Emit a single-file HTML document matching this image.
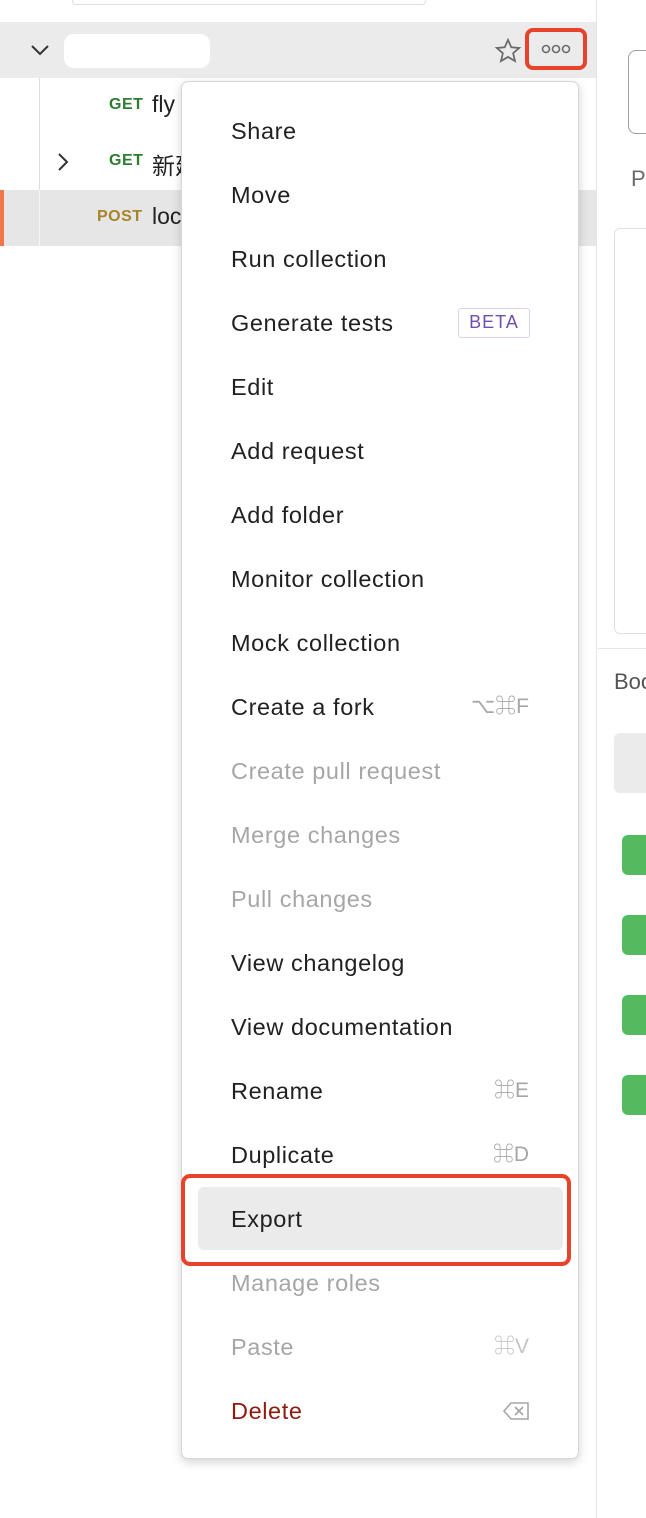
<!DOCTYPE html>
<html><head><meta charset="utf-8"><style>
*{margin:0;padding:0;box-sizing:border-box}
body{width:646px;height:1518px;position:relative;overflow:hidden;background:#fff;font-family:"Liberation Sans","Noto Sans CJK SC",sans-serif}
.abs{position:absolute}
.left{left:0;top:0;width:597px;height:1518px;background:#fff;border-right:1px solid #e6e6e6}
.menu{left:181px;top:81px;width:398px;height:1378px;background:#fff;border:1px solid #d6d6d6;border-radius:7px;box-shadow:0 3px 10px rgba(0,0,0,.18)}
.it{position:absolute;left:49px;font-size:23.5px;letter-spacing:0.6px;color:#212121;line-height:30px}
.dis{color:#a6a6a6}
.sc{position:absolute;right:49px;font-size:21px;color:#a6a6a6;line-height:30px}
.m{font-size:16px;font-weight:bold;letter-spacing:.5px}
.green{left:622px;width:40px;height:40px;background:#55b95f;border-radius:6px}
</style></head><body>
<div class="abs left"></div>
<div class="abs" style="left:72px;top:-6px;width:354px;height:11px;border:1px solid #e0e0e0;border-radius:4px;background:#fff"></div>
<div class="abs" style="left:0;top:22px;width:596px;height:56px;background:#ebebeb"></div>
<svg class="abs" style="left:30px;top:43px" width="20" height="14"><path d="M2 3l8 8 8-8" stroke="#333" stroke-width="2" fill="none"/></svg>
<div class="abs" style="left:64px;top:34px;width:146px;height:34px;background:#fff;border-radius:10px"></div>
<svg class="abs" style="left:494px;top:37px" width="28" height="28" viewBox="0 0 24 24"><path d="M12 2.5l2.8 6.3 6.8.6-5.2 4.5 1.6 6.7L12 17.1l-6 3.5 1.6-6.7-5.2-4.5 6.8-.6z" fill="none" stroke="#6b6b6b" stroke-width="1.5"/></svg>
<div class="abs" style="left:525px;top:28px;width:62px;height:42px;border:4px solid #e8432a;border-radius:8px"></div>
<svg class="abs" style="left:541px;top:44px" width="32" height="10"><circle cx="5" cy="5" r="3.5" fill="none" stroke="#6b6b6b" stroke-width="1.6"/><circle cx="15" cy="5" r="3.5" fill="none" stroke="#6b6b6b" stroke-width="1.6"/><circle cx="25" cy="5" r="3.5" fill="none" stroke="#6b6b6b" stroke-width="1.6"/></svg>
<div class="abs" style="left:39px;top:78px;width:1px;height:168px;background:#dcdcdc"></div>
<div class="abs" style="left:0;top:190px;width:596px;height:56px;background:#e6e6e6"></div>
<div class="abs" style="left:0;top:190px;width:4px;height:56px;background:#f07548"></div>
<div class="abs" style="left:39px;top:190px;width:1px;height:56px;background:#f5f5f5"></div>
<div class="abs m" style="left:109px;top:96px;color:#2e7d32">GET</div>
<div class="abs" style="left:152px;top:91px;font-size:23px;color:#212121">fly</div>
<svg class="abs" style="left:56px;top:152px" width="14" height="20"><path d="M3 2l8 8-8 8" stroke="#333" stroke-width="2" fill="none"/></svg>
<div class="abs m" style="left:109px;top:152px;color:#2e7d32">GET</div>
<div class="abs" style="left:152px;top:147px;font-size:23px;color:#212121">新建</div>
<div class="abs m" style="left:97px;top:208px;color:#a8842a">POST</div>
<div class="abs" style="left:152px;top:203px;font-size:23px;color:#212121">loc</div>

<div class="abs" style="left:628px;top:50px;width:40px;height:84px;border:1.5px solid #a0a0a0;border-radius:8px"></div>
<div class="abs" style="left:631px;top:166px;font-size:22px;color:#6b6b6b">P</div>
<div class="abs" style="left:614px;top:228px;width:40px;height:406px;border:1px solid #e0e0e0;border-radius:6px"></div>
<div class="abs" style="left:598px;top:648px;width:48px;height:1px;background:#e6e6e6"></div>
<div class="abs" style="left:614px;top:669px;font-size:22px;color:#555">Boo</div>
<div class="abs" style="left:614px;top:733px;width:40px;height:60px;background:#ebebeb;border-radius:6px"></div>
<div class="abs green" style="top:835px"></div>
<div class="abs green" style="top:915px"></div>
<div class="abs green" style="top:995px"></div>
<div class="abs green" style="top:1075px"></div>

<div class="abs menu">
<div class="abs" style="left:16px;top:1105px;width:365px;height:63px;background:#ebebeb;border-radius:6px"></div>
<div class="it" style="top:34px">Share</div>
<div class="it" style="top:98px">Move</div>
<div class="it" style="top:162px">Run collection</div>
<div class="it" style="top:226px">Generate tests</div>
<div class="abs" style="left:276px;top:226px;width:72px;height:30px;border:1.5px solid #ddd0f2;border-radius:3px;color:#6f4fb0;font-size:18px;text-align:center;line-height:27px;letter-spacing:1px">BETA</div>
<div class="it" style="top:290px">Edit</div>
<div class="it" style="top:354px">Add request</div>
<div class="it" style="top:418px">Add folder</div>
<div class="it" style="top:482px">Monitor collection</div>
<div class="it" style="top:546px">Mock collection</div>
<div class="it" style="top:610px">Create a fork</div><div class="sc" style="top:610px">⌥⌘F</div>
<div class="it dis" style="top:674px">Create pull request</div>
<div class="it dis" style="top:738px">Merge changes</div>
<div class="it dis" style="top:802px">Pull changes</div>
<div class="it" style="top:866px">View changelog</div>
<div class="it" style="top:930px">View documentation</div>
<div class="it" style="top:994px">Rename</div><div class="sc" style="top:994px">⌘E</div>
<div class="it" style="top:1058px">Duplicate</div><div class="sc" style="top:1058px">⌘D</div>
<div class="it" style="top:1122px">Export</div>
<div class="it dis" style="top:1186px">Manage roles</div>
<div class="it dis" style="top:1250px">Paste</div><div class="sc" style="top:1250px;color:#c4c4c4">⌘V</div>
<div class="it" style="top:1314px;color:#8e1a10">Delete</div>
<svg class="abs" style="left:320px;top:1319px" width="28" height="20"><path d="M9 2h17v16H9L2 10z" fill="none" stroke="#a6a6a6" stroke-width="1.6"/><path d="M13 6l8 8M21 6l-8 8" stroke="#a6a6a6" stroke-width="1.6"/></svg>
</div>
<div class="abs" style="left:181px;top:1174px;width:390px;height:92px;border:4px solid #e8432a;border-radius:9px"></div>
</body></html>
